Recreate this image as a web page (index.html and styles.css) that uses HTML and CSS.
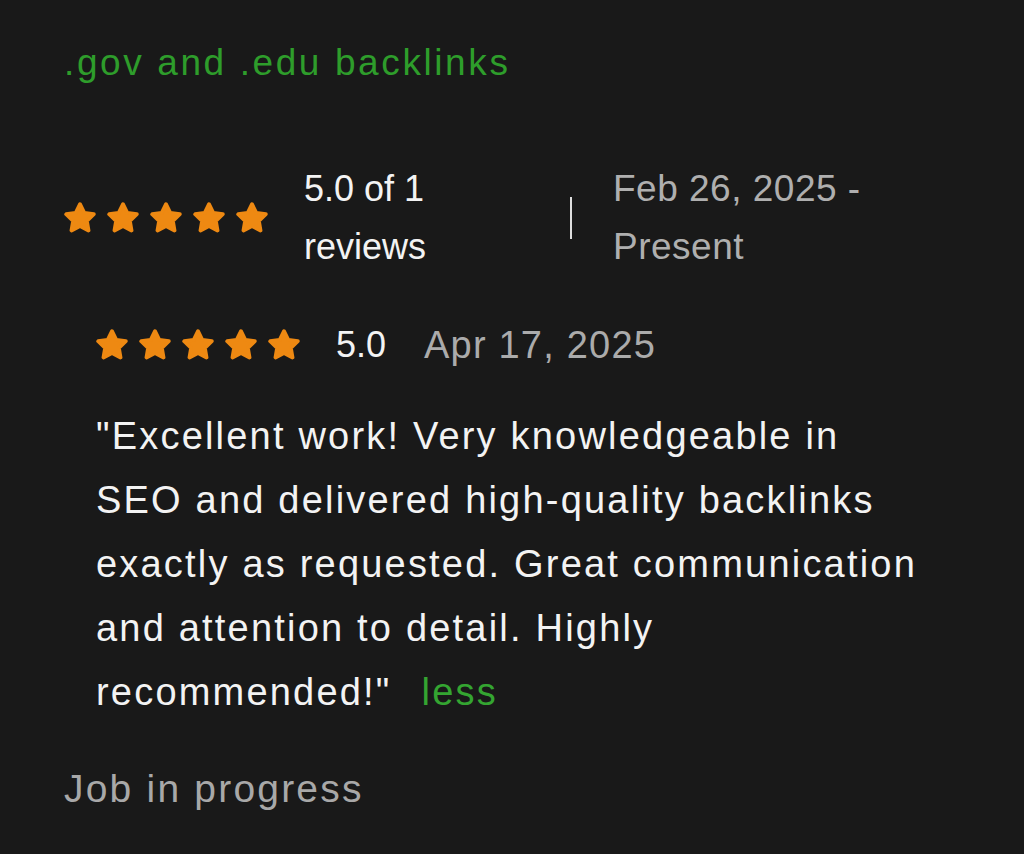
FILE: index.html
```html
<!DOCTYPE html>
<html lang="en">
<head>
  <meta charset="UTF-8">
  <meta name="viewport" content="width=device-width, initial-scale=1.0">
  <title>Work history</title>
  <link rel="stylesheet" href="styles.css">
</head>
<body>
  <!-- one job from the work history -->
  <div class="job">
    <h2 class="job-title">.gov and .edu backlinks</h2>

    <div class="summary">
      <div class="stars">
        <svg class="star" viewBox="1 1 22 22"><polygon points="12,2.5 14.94,8.45 21.51,9.41 16.76,14.05 17.88,20.59 12,17.5 6.12,20.59 7.24,14.05 2.49,9.41 9.06,8.45"/></svg>
        <svg class="star" viewBox="1 1 22 22"><polygon points="12,2.5 14.94,8.45 21.51,9.41 16.76,14.05 17.88,20.59 12,17.5 6.12,20.59 7.24,14.05 2.49,9.41 9.06,8.45"/></svg>
        <svg class="star" viewBox="1 1 22 22"><polygon points="12,2.5 14.94,8.45 21.51,9.41 16.76,14.05 17.88,20.59 12,17.5 6.12,20.59 7.24,14.05 2.49,9.41 9.06,8.45"/></svg>
        <svg class="star" viewBox="1 1 22 22"><polygon points="12,2.5 14.94,8.45 21.51,9.41 16.76,14.05 17.88,20.59 12,17.5 6.12,20.59 7.24,14.05 2.49,9.41 9.06,8.45"/></svg>
        <svg class="star" viewBox="1 1 22 22"><polygon points="12,2.5 14.94,8.45 21.51,9.41 16.76,14.05 17.88,20.59 12,17.5 6.12,20.59 7.24,14.05 2.49,9.41 9.06,8.45"/></svg>
      </div>
      <div class="score">5.0 of 1<br>reviews</div>
      <div class="divider"></div>
      <div class="period">Feb 26, 2025 -<br>Present</div>
    </div>

    <div class="review">
      <div class="review-head">
        <div class="stars">
          <svg class="star" viewBox="1 1 22 22"><polygon points="12,2.5 14.94,8.45 21.51,9.41 16.76,14.05 17.88,20.59 12,17.5 6.12,20.59 7.24,14.05 2.49,9.41 9.06,8.45"/></svg>
          <svg class="star" viewBox="1 1 22 22"><polygon points="12,2.5 14.94,8.45 21.51,9.41 16.76,14.05 17.88,20.59 12,17.5 6.12,20.59 7.24,14.05 2.49,9.41 9.06,8.45"/></svg>
          <svg class="star" viewBox="1 1 22 22"><polygon points="12,2.5 14.94,8.45 21.51,9.41 16.76,14.05 17.88,20.59 12,17.5 6.12,20.59 7.24,14.05 2.49,9.41 9.06,8.45"/></svg>
          <svg class="star" viewBox="1 1 22 22"><polygon points="12,2.5 14.94,8.45 21.51,9.41 16.76,14.05 17.88,20.59 12,17.5 6.12,20.59 7.24,14.05 2.49,9.41 9.06,8.45"/></svg>
          <svg class="star" viewBox="1 1 22 22"><polygon points="12,2.5 14.94,8.45 21.51,9.41 16.76,14.05 17.88,20.59 12,17.5 6.12,20.59 7.24,14.05 2.49,9.41 9.06,8.45"/></svg>
        </div>
        <span class="note">5.0</span>
        <span class="date">Apr 17, 2025</span>
      </div>
      <p class="comment">"Excellent work! Very knowledgeable in SEO and delivered high-quality backlinks exactly as requested. Great communication and attention to detail. Highly recommended!"<a class="less" href="#">less</a></p>
    </div>

    <div class="status">Job in progress</div>
  </div>
</body>
</html>
```

FILE: styles.css
```css
body {
  margin: 0;
  background-color: #191919;
  color: #f3f3f3;
  font-family: "Liberation Sans", Arial, sans-serif;
}

.job {
  padding: 43px 0 40px 64px;
}

.job-title {
  margin: 0;
  font-size: 37px;
  font-weight: normal;
  line-height: 40px;
  letter-spacing: 2.6px;
  color: #2e9d2b;
}

/* stars + note + dates */
.summary {
  display: flex;
  align-items: center;
  margin-top: 77px;
}

.stars {
  display: flex;
  gap: 11px;
}

.star {
  width: 32px;
  height: 32px;
  display: block;
}

.star polygon {
  fill: #ee8912;
  stroke: #ee8912;
  stroke-width: 2.6;
  stroke-linejoin: round;
}

.score {
  width: 266px;
  margin-left: 36px;
  font-size: 36px;
  line-height: 58px;
}

.divider {
  width: 2px;
  height: 42px;
  background-color: #dedede;
}

.period {
  margin-left: 41px;
  font-size: 37px;
  line-height: 58px;
  letter-spacing: 0.5px;
  color: #afafaf;
}

/* the client review */
.review {
  padding-left: 32px;
  margin-top: 45px;
}

.review-head {
  display: flex;
  align-items: center;
  height: 48px;
}

.note {
  margin-left: 36px;
  font-size: 36px;
  line-height: 48px;
}

.date {
  margin-left: 38px;
  font-size: 38px;
  line-height: 48px;
  letter-spacing: 1.2px;
  color: #ababab;
}

.comment {
  margin: 35px 0 0 0;
  max-width: 832px;
  font-size: 38px;
  line-height: 64px;
  letter-spacing: 2.2px;
}

.less {
  margin-left: 30px;
  color: #34a531;
  text-decoration: none;
}

.status {
  margin-top: 41px;
  font-size: 39px;
  line-height: 48px;
  letter-spacing: 2.2px;
  color: #a8a8a8;
}
```
